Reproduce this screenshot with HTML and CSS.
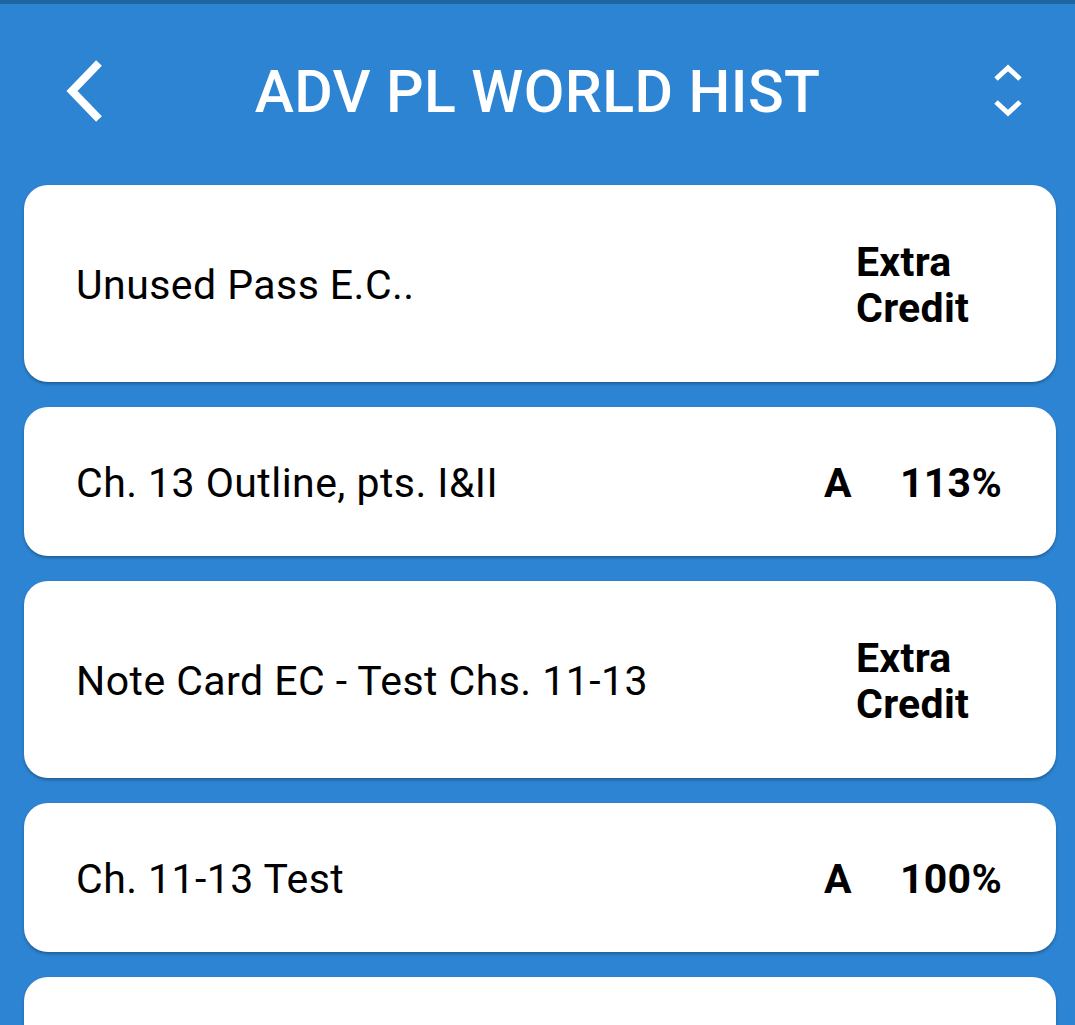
FILE: index.html
```html
<!DOCTYPE html>
<html>
<head>
<meta charset="utf-8">
<link rel="stylesheet" href="styles.css">
</head>
<body>
<div class="topbar"></div>
<header class="header">
  <button class="icon back" aria-label="Back">
    <svg width="40" height="62" viewBox="0 0 40 62"><polyline points="33,3 6,31 33,59" fill="none" stroke="#fff" stroke-width="8" stroke-linecap="butt"/></svg>
  </button>
  <h1 class="title">ADV PL WORLD HIST</h1>
  <button class="icon sort" aria-label="Sort">
    <svg width="30" height="56" viewBox="0 0 30 56"><polyline points="3,16 15,5 27,16" fill="none" stroke="#fff" stroke-width="5"/><polyline points="3,39 15,50 27,39" fill="none" stroke="#fff" stroke-width="5"/></svg>
  </button>
</header>
<main class="list">
  <div class="card">
    <div class="name">Unused Pass E.C..</div>
    <div class="ec">Extra Credit</div>
  </div>
  <div class="card">
    <div class="name">Ch. 13 Outline, pts. I&amp;II</div>
    <div class="grade"><span class="letter">A</span><span class="pct">113%</span></div>
  </div>
  <div class="card">
    <div class="name">Note Card EC - Test Chs. 11-13</div>
    <div class="ec">Extra Credit</div>
  </div>
  <div class="card">
    <div class="name">Ch. 11-13 Test</div>
    <div class="grade"><span class="letter">A</span><span class="pct">100%</span></div>
  </div>
  <div class="card">
    <div class="name">&nbsp;</div>
  </div>
</main>
</body>
</html>
```
FILE: styles.css
```css
html, body {
  margin: 0;
  padding: 0;
  background: #2d84d2;
  font-family: Roboto, "Liberation Sans", sans-serif;
  height: 1025px;
  overflow: hidden;
}
.topbar {
  height: 4px;
  background: #1f64a3;
}
.header {
  height: 181px;
  display: flex;
  align-items: center;
  justify-content: space-between;
  padding: 0 52px 0 66px;
  box-sizing: border-box;
  position: relative;
}
.icon {
  background: none;
  border: 0;
  padding: 0;
  display: flex;
  margin-top: -8px;
}
.back { margin-top: -8px; }
.title {
  margin: 0;
  color: #fff;
  font-size: 59px;
  font-weight: 500;
  letter-spacing: 0.4px;
  position: absolute;
  left: 0;
  right: 0;
  top: 48px;
  text-align: center;
  pointer-events: none;
  line-height: 80px;
}
.list {
  display: flex;
  flex-direction: column;
  gap: 25px;
  padding: 0 19px 0 24px;
}
.card {
  background: #fff;
  border-radius: 24px;
  box-shadow: 0 2px 3px rgba(0, 0, 0, 0.28);
  display: flex;
  align-items: center;
  justify-content: space-between;
  padding: 55px 54px 51px 52px;
  color: #000;
}
.name {
  font-size: 41px;
  line-height: 43px;
  letter-spacing: 0.45px;
}
.ec {
  width: 146px;
  font-size: 41px;
  font-weight: 700;
  line-height: 45.5px;
  letter-spacing: 0.3px;
}
.grade {
  display: flex;
  font-size: 41px;
  line-height: 43px;
  font-weight: 700;
  letter-spacing: 0.3px;
}
.letter { margin-right: 48px; }
```
